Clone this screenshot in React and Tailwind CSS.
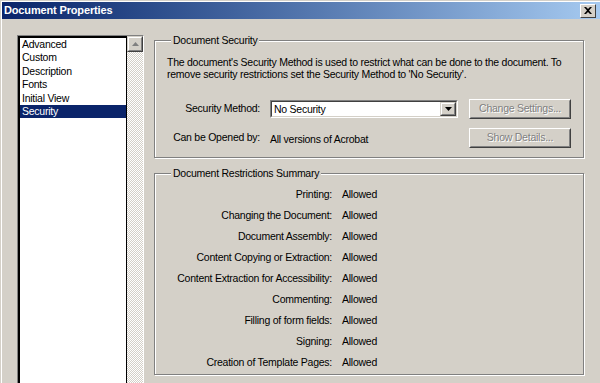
import React from "react";

const items = ["Advanced", "Custom", "Description", "Fonts", "Initial View", "Security"];
const rows = [
  "Printing:",
  "Changing the Document:",
  "Document Assembly:",
  "Content Copying or Extraction:",
  "Content Extraction for Accessibility:",
  "Commenting:",
  "Filling of form fields:",
  "Signing:",
  "Creation of Template Pages:",
];

function RaisedButton({ children }) {
  return (
    <div className="h-[20px] w-[102px] border border-t-white border-l-white border-r-[#404040] border-b-[#404040]">
      <div className="h-full w-full border border-t-[#d4d0c8] border-l-[#d4d0c8] border-r-[#808080] border-b-[#808080] flex items-center justify-center text-[#808080] [text-shadow:1px_1px_0_#fff]">
        {children}
      </div>
    </div>
  );
}

export default function App() {
  return (
    <div className="w-[600px] h-[383px] overflow-hidden bg-[#d4d0c8] pt-[2px] pl-[2px] shadow-[inset_1px_1px_0_#d4d0c8,inset_2px_2px_0_#fff] font-['Liberation_Sans',Arial,sans-serif] text-[10.5px] tracking-[-0.25px] text-black">
      {/* Title bar */}
      <div className="h-[17px] bg-gradient-to-r from-[#0a246a] to-[#a6caf0] flex items-center justify-between pl-[2px] pr-[4px]">
        <span className="text-white font-bold text-[11px] tracking-[-0.15px] leading-[13px]">Document Properties</span>
        <div className="w-[16px] h-[14px] bg-[#d4d0c8] border border-t-white border-l-white border-r-[#404040] border-b-[#404040] flex items-center justify-center">
          <svg width="8" height="7" viewBox="0 0 8 7">
            <path d="M0 0h2l2 2 2-2h2L5 3.5 8 7H6L4 5 2 7H0l3-3.5z" fill="#000" />
          </svg>
        </div>
      </div>

      <div className="flex">
        {/* Listbox */}
        <div className="ml-[15px] mt-[16px] w-[127px] h-[360px] border border-t-[#808080] border-l-[#808080] border-r-white border-b-white flex">
          <div className="w-[109px] h-full bg-white border-2 border-black border-r-[1px]">
            {items.map((it) => (
              <div
                key={it}
                className={
                  "h-[13.4px] leading-[13.4px] pl-[2px] whitespace-nowrap " +
                  (it === "Security" ? "bg-[#0a246a] text-white" : "text-black")
                }
              >
                {it}
              </div>
            ))}
          </div>
          <div className="w-[16px] h-full flex flex-col bg-[repeating-conic-gradient(#ffffff_0_25%,#d4d0c8_0_50%)] bg-[length:2px_2px]">
            <div className="w-[16px] h-[16px] bg-[#d4d0c8] border border-t-[#d4d0c8] border-l-[#d4d0c8] border-r-[#404040] border-b-[#404040]">
              <div className="w-full h-full border border-t-white border-l-white border-r-[#808080] border-b-[#808080] flex items-center justify-center">
                <svg width="7" height="4" viewBox="0 0 7 4">
                  <path d="M3.5 0L7 4H0z" fill="#808080" />
                </svg>
              </div>
            </div>
          </div>
        </div>

        {/* Right panel */}
        <div className="ml-[10px] mt-[21px] w-[430px] flex flex-col">
          {/* Group 1 */}
          <div className="border border-[#808080] shadow-[inset_1px_1px_0_#fff,1px_1px_0_#fff] pb-[9px]">
            <span className="block w-fit -mt-[7px] ml-[16px] px-[2px] h-[13px] leading-[13px] bg-[#d4d0c8]">
              Document Security
            </span>
            <p className="mt-[9px] pl-[12px] leading-[12px] whitespace-nowrap">
              The document's Security Method is used to restrict what can be done to the document. To
              <br />
              remove security restrictions set the Security Method to 'No Security'.
            </p>
            <div className="mt-[19px] ml-[12px] grid grid-cols-[93px_188px_102px] gap-x-[10px] gap-y-[9px] items-center">
              <div className="text-right whitespace-nowrap">Security Method:</div>
              <div className="h-[18px] w-[188px] border border-t-[#808080] border-l-[#808080] border-r-white border-b-white">
                <div className="h-full w-full border border-t-[#404040] border-l-[#404040] border-r-[#d4d0c8] border-b-[#d4d0c8] bg-white flex">
                  <div className="flex-1 pl-[2px] leading-[14px] whitespace-nowrap">No Security</div>
                  <div className="w-[16px] h-full bg-[#d4d0c8] border border-t-[#d4d0c8] border-l-[#d4d0c8] border-r-[#404040] border-b-[#404040]">
                    <div className="w-full h-full border border-t-white border-l-white border-r-[#808080] border-b-[#808080] flex items-center justify-center">
                      <svg width="7" height="4" viewBox="0 0 7 4">
                        <path d="M0 0h7L3.5 4z" fill="#000" />
                      </svg>
                    </div>
                  </div>
                </div>
              </div>
              <div className="pl-[1px]">
                <RaisedButton>Change Settings...</RaisedButton>
              </div>
              <div className="text-right whitespace-nowrap">Can be Opened by:</div>
              <div className="whitespace-nowrap pt-[3px]">All versions of Acrobat</div>
              <div className="pl-[1px]">
                <RaisedButton>Show Details...</RaisedButton>
              </div>
            </div>
          </div>

          {/* Group 2 */}
          <div className="mt-[15px] border border-[#808080] shadow-[inset_1px_1px_0_#fff,1px_1px_0_#fff] pb-[1px]">
            <span className="block w-fit -mt-[7px] ml-[16px] px-[2px] h-[13px] leading-[13px] bg-[#d4d0c8]">
              Document Restrictions Summary
            </span>
            <div className="mt-[4px] grid grid-cols-[177px_auto] gap-x-[10px]">
              {rows.map((r) => (
                <React.Fragment key={r}>
                  <div className="h-[21px] leading-[21px] text-right whitespace-nowrap">{r}</div>
                  <div className="h-[21px] leading-[21px]">Allowed</div>
                </React.Fragment>
              ))}
            </div>
          </div>
        </div>
      </div>
    </div>
  );
}
